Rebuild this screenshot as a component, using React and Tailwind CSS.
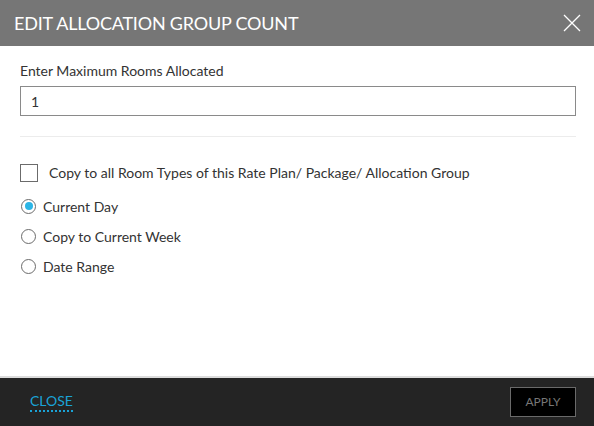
import { useState } from "react";

const options = ["Current Day", "Copy to Current Week", "Date Range"];

function Radio({ checked }) {
  return (
    <span className="flex size-[15px] items-center justify-center rounded-full border-[1.5px] border-[#6b6b6b] bg-white">
      {checked && <span className="size-[8px] rounded-full bg-[#2bb5e6]" />}
    </span>
  );
}

export default function App() {
  const [selected, setSelected] = useState(0);

  return (
    <div className="flex h-[426px] w-[594px] flex-col bg-white font-['Lato','Open_Sans',sans-serif] text-[#333]">
      <div className="flex h-[46px] items-center justify-between bg-[#767676] pl-[14px] pr-[13px]">
        <h2 className="text-[18px] tracking-[-0.2px] text-white">EDIT ALLOCATION GROUP COUNT</h2>
        <svg width="18" height="18" viewBox="0 0 18 18" className="text-white">
          <path d="M1 1 L17 17 M17 1 L1 17" stroke="currentColor" strokeWidth="1.3" />
        </svg>
      </div>

      <div className="flex flex-1 flex-col pl-[20px] pr-[18px] pt-[16px]">
        <label className="text-[14px] leading-[18px]">Enter Maximum Rooms Allocated</label>
        <input
          defaultValue="1"
          className="mt-[6px] h-[30px] w-full border-[1.5px] border-[#8a8a8a] px-[10px] text-[14px] outline-none"
        />
        <div className="mt-[20px] h-px bg-[#ececec]" />

        <label className="mt-[25px] flex items-center gap-[11px] text-[14px]">
          <span className="size-[18px] border border-[#6b6b6b] bg-white" />
          Copy to all Room Types of this Rate Plan/ Package/ Allocation Group
        </label>

        <div className="mt-[8px] flex flex-col">
          {options.map((o, i) => (
            <button
              key={o}
              onClick={() => setSelected(i)}
              className="flex h-[30px] items-center gap-[7px] pl-px text-left text-[14px]"
            >
              <Radio checked={selected === i} />
              {o}
            </button>
          ))}
        </div>
      </div>

      <div className="h-[2px] bg-[#dcdcdc]" />
      <div className="flex h-[48px] items-center justify-between bg-[#242424] pl-[30px] pr-[18px]">
        <button className="border-b-2 border-dotted border-[#1aa3d6] pb-[1px] text-[14px] leading-[16px] text-[#1aa3d6]">
          CLOSE
        </button>
        <button className="h-[30px] w-[66px] border border-[#6a6a6a] bg-black text-[12px] text-[#777]">
          APPLY
        </button>
      </div>
    </div>
  );
}
